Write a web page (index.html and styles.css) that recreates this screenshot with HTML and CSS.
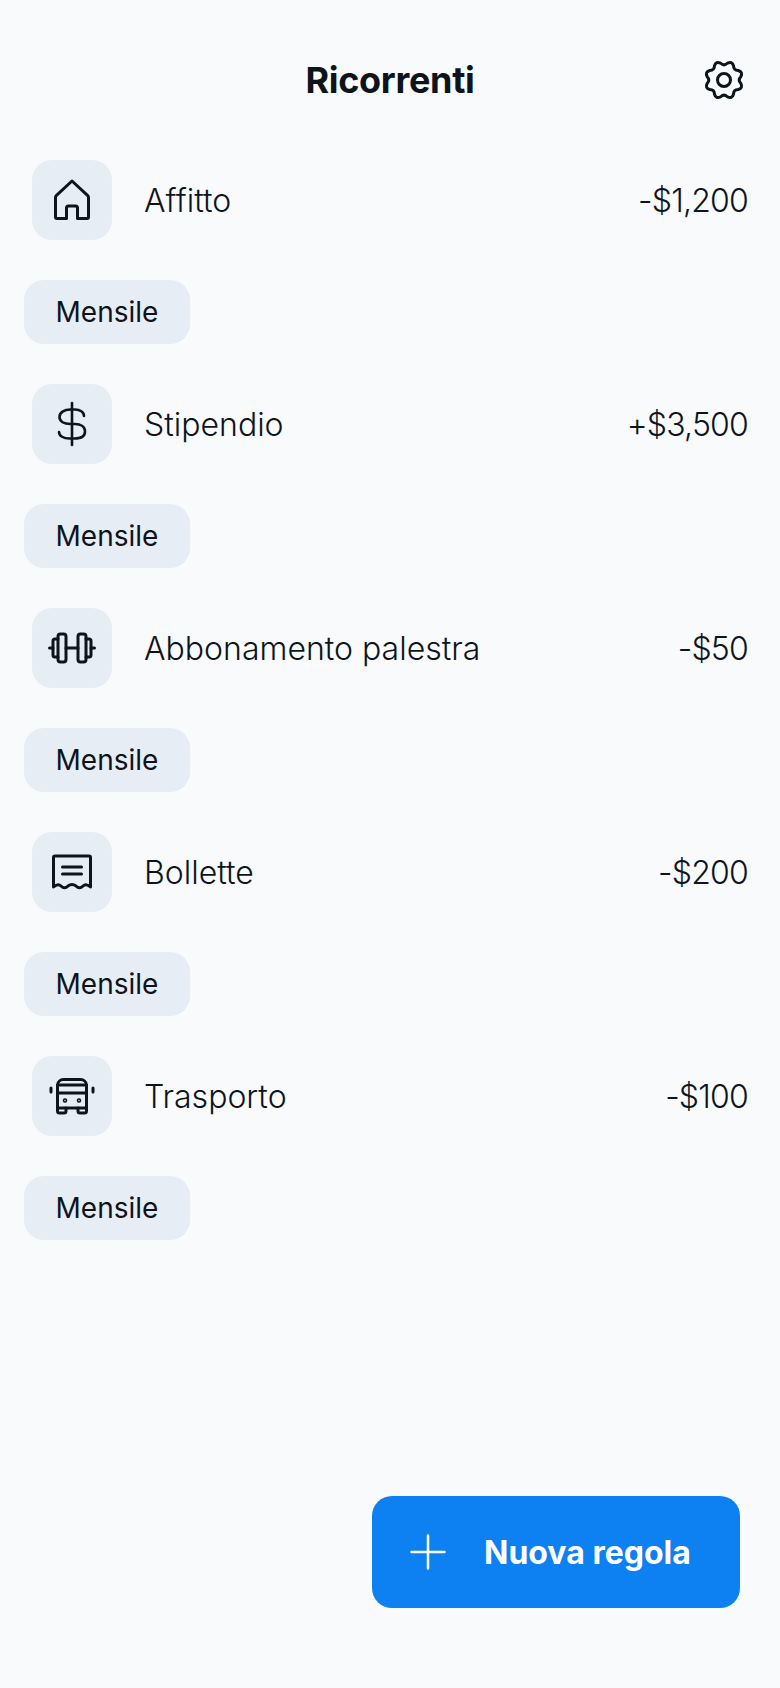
FILE: index.html
```html
<!DOCTYPE html>
<html lang="it">
<head>
    <meta charset="UTF-8">
    <meta name="viewport" content="width=device-width, initial-scale=1.0">
    <title>Ricorrenti</title>
    <link rel="stylesheet" href="styles.css">
</head>
<body>
    <header class="topbar">
        <h1 class="title">Ricorrenti</h1>
        <svg class="gear" viewBox="0 0 48 48" fill="none" stroke="currentColor" stroke-width="3" stroke-linejoin="round">
            <path d="M27.34 7.23Q32 4.69 33.5 9.78Q33.62 14.38 38.22 14.5Q43.31 16 40.77 20.66Q37.6 24 40.77 27.34Q43.31 32 38.22 33.5Q33.62 33.62 33.5 38.22Q32 43.31 27.34 40.77Q24 37.6 20.66 40.77Q16 43.31 14.5 38.22Q14.38 33.62 9.78 33.5Q4.69 32 7.23 27.34Q10.4 24 7.23 20.66Q4.69 16 9.78 14.5Q14.38 14.38 14.5 9.78Q16 4.69 20.66 7.23Q24 10.4 27.34 7.23Z"/>
            <circle cx="24" cy="24" r="6.5"/>
        </svg>
    </header>

    <main class="list">
        <section class="entry">
            <div class="row">
                <div class="tile">
                    <svg class="icon" viewBox="0 0 48 48" fill="none" stroke="currentColor" stroke-width="3" stroke-linejoin="round">
                        <path d="M18.5 42.5H9a1.5 1.5 0 0 1-1.5-1.5V21.5a3 3 0 0 1 1-2.2L24 5l15.5 14.3a3 3 0 0 1 1 2.2V41a1.5 1.5 0 0 1-1.5 1.5H29.5V32a2 2 0 0 0-2-2h-7a2 2 0 0 0-2 2Z"/>
                    </svg>
                </div>
                <span class="name">Affitto</span>
                <span class="amount">-$1,200</span>
            </div>
            <span class="chip">Mensile</span>
        </section>

        <section class="entry">
            <div class="row">
                <div class="tile">
                    <svg class="icon" viewBox="0 0 48 48" fill="none" stroke="currentColor" stroke-width="2.6" stroke-linecap="round">
                        <path d="M24 3V45"/>
                        <path d="M36 16C36 12 32 9.5 27 9.5H22.5C16 9.5 11.5 12.5 11.5 17S16 24 22.5 24H27C33 24 37 27 37 31.5S33 38.5 26.5 38.5H21.5C15.5 38.5 11 36 11 32"/>
                    </svg>
                </div>
                <span class="name">Stipendio</span>
                <span class="amount">+$3,500</span>
            </div>
            <span class="chip">Mensile</span>
        </section>

        <section class="entry">
            <div class="row">
                <div class="tile">
                    <svg class="icon" viewBox="0 0 48 48" fill="none" stroke="currentColor" stroke-width="3" stroke-linecap="round" stroke-linejoin="round">
                        <rect x="10" y="10" width="8" height="28" rx="2.5"/>
                        <rect x="30" y="10" width="8" height="28" rx="2.5"/>
                        <path d="M10 15H7a2 2 0 0 0-2 2V31a2 2 0 0 0 2 2H10"/>
                        <path d="M38 15H41a2 2 0 0 1 2 2V31a2 2 0 0 1-2 2H38"/>
                        <path d="M18 24H30M1.5 24H5M43 24H46.5"/>
                    </svg>
                </div>
                <span class="name">Abbonamento palestra</span>
                <span class="amount">-$50</span>
            </div>
            <span class="chip">Mensile</span>
        </section>

        <section class="entry">
            <div class="row">
                <div class="tile">
                    <svg class="icon" viewBox="0 0 48 48" fill="none" stroke="currentColor" stroke-width="3" stroke-linecap="round" stroke-linejoin="round">
                        <path d="M5.5 39V9.5a1.5 1.5 0 0 1 1.5-1.5H41a1.5 1.5 0 0 1 1.5 1.5V39Q38 35 35 38Q31.5 41.5 28 38Q24 35 20 38Q16.5 41.5 13 38Q10 35 5.5 39Z"/>
                        <path d="M14.5 19H33.5M14.5 26H33.5"/>
                    </svg>
                </div>
                <span class="name">Bollette</span>
                <span class="amount">-$200</span>
            </div>
            <span class="chip">Mensile</span>
        </section>

        <section class="entry">
            <div class="row">
                <div class="tile">
                    <svg class="icon" viewBox="0 0 48 48" fill="none" stroke="currentColor" stroke-width="3" stroke-linecap="round" stroke-linejoin="round">
                        <path d="M9.5 13A6 6 0 0 1 15.500 7.500H32.500A6 6 0 0 1 38.500 13V36H9.500Z"/>
                        <path d="M9.500 13H38.500M9.500 21H38.500"/>
                        <path d="M9.500 36V39a2 2 0 0 0 2 2H16a2 2 0 0 0 2-2V36M30 36V39a2 2 0 0 0 2 2H36.500a2 2 0 0 0 2-2V36"/>
                        <path d="M3 16V20M45 16V20"/>
                        <circle cx="17" cy="28.500" r="0.800"/>
                        <circle cx="31" cy="28.500" r="0.800"/>
                    </svg>
                </div>
                <span class="name">Trasporto</span>
                <span class="amount">-$100</span>
            </div>
            <span class="chip">Mensile</span>
        </section>
    </main>

    <button class="new-rule" type="button">
        <svg class="plus" viewBox="0 0 36 36" fill="none" stroke="currentColor" stroke-width="2.5" stroke-linecap="round">
            <path d="M1.5 18H34.5M18 1.5V34.5"/>
        </svg>
        <span>Nuova regola</span>
    </button>
</body>
</html>
```

FILE: styles.css
```css
body {
    position: relative;
    height: 1688px;
    margin: 0;
    overflow: hidden;
    background-color: #f8fafc;
    color: #0d141c;
    font-family: "Inter", "Noto Sans", sans-serif;
}
.topbar {
    display: flex;
    justify-content: center;
    align-items: center;
    position: relative;
    height: 80px;
    padding-top: 40px;
}
.title {
    margin: 0;
    font-size: 36px;
    font-weight: 700;
    letter-spacing: -0.3px;
}
.gear {
    position: absolute;
    top: 56px;
    right: 32px;
    width: 48px;
    height: 48px;
}
.list {
    display: flex;
    flex-direction: column;
    gap: 40px;
    padding-top: 40px;
}
.entry {
    display: flex;
    flex-direction: column;
    align-items: flex-start;
    gap: 40px;
    padding-left: 24px;
}
.row {
    display: flex;
    align-items: center;
    align-self: stretch;
    padding: 0 32px 0 8px;
}
.tile {
    display: flex;
    justify-content: center;
    align-items: center;
    flex: none;
    width: 80px;
    height: 80px;
    margin-right: 32px;
    border-radius: 20px;
    background-color: #e7edf5;
}
.icon {
    width: 48px;
    height: 48px;
}
.name {
    flex: 1;
    font-size: 32px;
    font-weight: 300;
}
.amount {
    font-size: 32px;
    font-weight: 300;
    letter-spacing: -0.8px;
}
.chip {
    display: flex;
    align-items: center;
    justify-content: center;
    width: 166px;
    height: 64px;
    border-radius: 20px;
    background-color: #e7edf5;
    font-size: 28px;
    font-weight: 400;
}
.new-rule {
    display: flex;
    align-items: center;
    gap: 38px;
    position: absolute;
    top: 1496px;
    left: 372px;
    width: 368px;
    height: 112px;
    padding: 0 0 0 38px;
    border: none;
    border-radius: 20px;
    background-color: #0d80f2;
    color: white;
    font-family: inherit;
    font-size: 32px;
    font-weight: 700;
}
.plus {
    flex: none;
    width: 36px;
    height: 36px;
}
```
